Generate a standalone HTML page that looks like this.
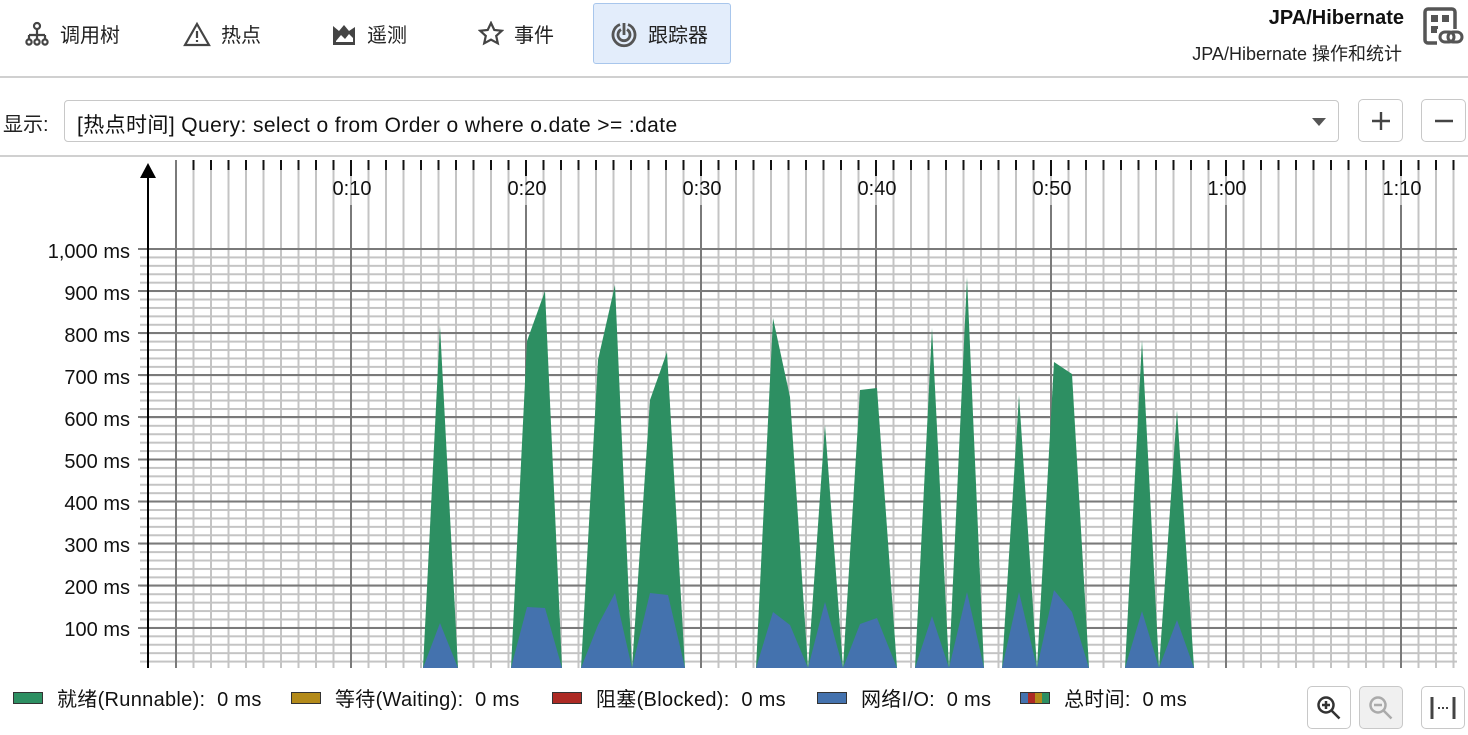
<!DOCTYPE html>
<html><head><meta charset="utf-8"><style>
*{box-sizing:border-box;margin:0;padding:0}
body{width:1468px;height:735px;background:#fff;position:relative;overflow:hidden;font-family:"Liberation Sans","Noto Sans CJK SC",sans-serif;color:#111}
.tab{position:absolute;top:3px;height:61px;display:flex;align-items:center;font-size:20px;color:#222}
.tab svg{margin-right:10px}
.sel{background:#e3edfb;border:1px solid #a8c6ec;border-radius:3px}
.btn{position:absolute;border:1.5px solid #c8c8c8;border-radius:5px;background:#fff;display:flex;align-items:center;justify-content:center}
.leg{position:absolute;top:683px;font-size:20px;display:flex;align-items:center;white-space:nowrap;letter-spacing:0.3px}
.sw{display:inline-block;width:30px;height:12px;border:1.5px solid #333;margin-right:14px}
</style></head><body>
<div class="tab" style="left:24px"><svg width="26" height="26" viewBox="0 0 26 26" fill="none" stroke="#444" stroke-width="2.2"><circle cx="13" cy="5" r="3"/><path d="M13 8v6M5 14h16M5 14v4M13 14v4M21 14v4"/><circle cx="5" cy="21" r="2.6"/><circle cx="13" cy="21" r="2.6"/><circle cx="21" cy="21" r="2.6"/></svg>调用树</div>
<div class="tab" style="left:183px"><svg width="28" height="26" viewBox="0 0 28 26" fill="none" stroke="#444" stroke-width="2.2"><path d="M14 3L26 24H2Z"/><path d="M14 10v7M14 19v2"/></svg>热点</div>
<div class="tab" style="left:331px"><svg width="26" height="26" viewBox="0 0 26 26"><path d="M2 5l6 5 5-6 5 6 6-4v18H2Z" fill="#444"/><path d="M5 20l5-6 4 4 4-5 4 4v4H5Z" fill="#fff"/></svg>遥测</div>
<div class="tab" style="left:478px"><svg width="26" height="26" viewBox="0 0 26 26" fill="none" stroke="#444" stroke-width="2.2"><path d="M13 2l3.3 7 7.5.8-5.6 5.1 1.6 7.4L13 18.6 6.2 22.3l1.6-7.4L2.2 9.8 9.7 9Z"/></svg>事件</div>
<div class="tab sel" style="left:593px;width:138px;padding-left:16px"><svg width="28" height="28" viewBox="0 0 28 28" fill="none" stroke="#555" stroke-width="2.8"><path d="M18 4.5A11 11 0 1 1 10 4.5"/><path d="M17 9.5A6 6 0 1 1 11 9.5"/><path d="M14 3v12"/></svg>跟踪器</div>
<div style="position:absolute;right:64px;top:7px;font-size:20px;font-weight:bold">JPA/Hibernate</div>
<div style="position:absolute;right:66px;top:40px;font-size:18px;color:#222">JPA/Hibernate 操作和统计</div>
<svg style="position:absolute;left:1423px;top:7px" width="44" height="40" viewBox="0 0 44 40"><rect x="2" y="2" width="30" height="34" rx="3" fill="none" stroke="#555" stroke-width="3.5"/><rect x="8" y="8" width="7" height="7" fill="#555"/><rect x="19" y="8" width="7" height="7" fill="#555"/><rect x="8" y="19" width="7" height="7" fill="#555"/><rect x="14" y="22" width="28" height="17" fill="#fff"/><rect x="17" y="25" width="14" height="10" rx="5" fill="none" stroke="#555" stroke-width="3"/><rect x="25" y="25" width="14" height="10" rx="5" fill="none" stroke="#555" stroke-width="3"/></svg>
<div style="position:absolute;left:0;top:76px;width:1468px;height:1.5px;background:#d0d0d0"></div>
<div style="position:absolute;left:3px;top:108px;font-size:20px;color:#222">显示:</div>
<div style="position:absolute;left:64px;top:100px;width:1275px;height:42px;border:1.5px solid #c8c8c8;border-radius:4px;font-size:21px;letter-spacing:0.4px;padding:8px 0 0 12px">[热点时间] Query: select o from Order o where o.date &gt;= :date
<div style="position:absolute;right:12px;top:17px;width:0;height:0;border-left:7px solid transparent;border-right:7px solid transparent;border-top:8px solid #555"></div></div>
<div class="btn" style="left:1358px;top:99px;width:45px;height:43px"><svg width="22" height="22"><path d="M11 2v18M2 11h18" stroke="#444" stroke-width="2.4"/></svg></div>
<div class="btn" style="left:1421px;top:99px;width:45px;height:43px"><svg width="22" height="22"><path d="M2 11h18" stroke="#444" stroke-width="2.4"/></svg></div>
<div style="position:absolute;left:0;top:155px;width:1468px;height:1.5px;background:#d0d0d0"></div>
<svg style="position:absolute;left:0;top:0" width="1468" height="735">
<defs>
<pattern id="vp" x="175" y="0" width="17.5" height="10" patternUnits="userSpaceOnUse"><rect x="0" y="0" width="2" height="10" fill="#c4c4c4"/></pattern>
<pattern id="hp" x="0" y="248" width="10" height="8.42" patternUnits="userSpaceOnUse"><rect x="0" y="0" width="10" height="2" fill="#c4c4c4"/></pattern>
<pattern id="tp" x="175" y="0" width="17.5" height="10" patternUnits="userSpaceOnUse"><rect x="0" y="0" width="2" height="10" fill="#111"/></pattern>
</defs>
<rect x="175" y="170" width="1282" height="498" fill="url(#vp)"/>
<rect x="175" y="160" width="1282" height="10" fill="url(#tp)"/>
<rect x="140" y="249" width="1317" height="419" fill="url(#hp)"/>
<g stroke="#7a7a7a" stroke-width="2">
<path d="M176 160V668M351 205V668M526 205V668M701 205V668M876 205V668M1051 205V668M1226 205V668M1401 205V668"/>
<path d="M138 249H1457M138 291H1457M138 333H1457M138 375H1457M138 417H1457M138 459.5H1457M138 501.5H1457M138 543.5H1457M138 585.5H1457M138 628H1457"/>
</g>
<g stroke="#111" stroke-width="2"><path d="M351 160v16M526 160v16M701 160v16M876 160v16M1051 160v16M1226 160v16M1401 160v16"/></g>
<g fill="#2d8f62">
<path d="M423 668L440 326L458 668Z"/>
<path d="M511 668L527 341L545 291L562 668Z"/>
<path d="M581 668L598 360L615 285L632 668Z"/>
<path d="M632 668L650 400L667 352L685 668Z"/>
<path d="M756 668L773 318L790 397L808 668Z"/>
<path d="M808 668L825 425L843 668Z"/>
<path d="M843 668L860 390L877 388L897 668Z"/>
<path d="M915 668L932 328L949 668Z"/>
<path d="M949 668L967 277L984 668Z"/>
<path d="M1002 668L1019 395L1037 668Z"/>
<path d="M1037 668L1054 362L1072 374L1089 668Z"/>
<path d="M1125 668L1142 340L1159 668Z"/>
<path d="M1159 668L1177 410L1194 668Z"/>
</g>
<g fill="#4472ae">
<path d="M423 668L440 623L458 668Z"/>
<path d="M511 668L527 607L545 608L562 668Z"/>
<path d="M581 668L598 625L615 593L632 668Z"/>
<path d="M632 668L650 593L668 595L685 668Z"/>
<path d="M756 668L773 612L790 625L808 668Z"/>
<path d="M808 668L825 602L843 668Z"/>
<path d="M843 668L860 624L877 618L897 668Z"/>
<path d="M915 668L932 616L949 668Z"/>
<path d="M949 668L967 592L984 668Z"/>
<path d="M1002 668L1019 592L1037 668Z"/>
<path d="M1037 668L1054 590L1072 612L1089 668Z"/>
<path d="M1125 668L1142 611L1159 668Z"/>
<path d="M1159 668L1177 620L1194 668Z"/>
</g>
<path d="M148 176V668" stroke="#000" stroke-width="2"/>
<path d="M140 178L148 163L156 178Z" fill="#000"/>
<g font-family="Liberation Sans, sans-serif" font-size="20" fill="#111" text-anchor="end">
<text x="130" y="258">1,000 ms</text><text x="130" y="300">900 ms</text><text x="130" y="342">800 ms</text><text x="130" y="384">700 ms</text><text x="130" y="426">600 ms</text><text x="130" y="468">500 ms</text><text x="130" y="510">400 ms</text><text x="130" y="552">300 ms</text><text x="130" y="594">200 ms</text><text x="130" y="636">100 ms</text>
</g>
<g font-family="Liberation Sans, sans-serif" font-size="20" fill="#111" text-anchor="middle">
<text x="352" y="195">0:10</text><text x="527" y="195">0:20</text><text x="702" y="195">0:30</text><text x="877" y="195">0:40</text><text x="1052" y="195">0:50</text><text x="1227" y="195">1:00</text><text x="1402" y="195">1:10</text>
</g>
</svg>
<div class="leg" style="left:13px"><span class="sw" style="background:#2d8f62"></span>就绪(Runnable):&nbsp; 0 ms</div>
<div class="leg" style="left:291px"><span class="sw" style="background:#b38a1a"></span>等待(Waiting):&nbsp; 0 ms</div>
<div class="leg" style="left:552px"><span class="sw" style="background:#ad2a24"></span>阻塞(Blocked):&nbsp; 0 ms</div>
<div class="leg" style="left:817px"><span class="sw" style="background:#4472ae"></span>网络I/O:&nbsp; 0 ms</div>
<div class="leg" style="left:1020px"><span class="sw" style="background:linear-gradient(90deg,#4472ae 25%,#ad2a24 25% 50%,#b38a1a 50% 75%,#2d8f62 75%)"></span>总时间:&nbsp; 0 ms</div>
<div class="btn" style="left:1307px;top:686px;width:44px;height:43px"><svg width="26" height="26" fill="none" stroke="#333" stroke-width="2.5"><circle cx="10" cy="10" r="7.5"/><path d="M10 6v8M6 10h8M15.5 15.5l8 8"/></svg></div>
<div class="btn" style="left:1359px;top:686px;width:44px;height:43px;background:#f0f0f0"><svg width="26" height="26" fill="none" stroke="#aaa" stroke-width="2.5"><circle cx="10" cy="10" r="7.5"/><path d="M6 10h8M15.5 15.5l8 8"/></svg></div>
<div class="btn" style="left:1421px;top:686px;width:44px;height:43px"><svg width="30" height="26"><path d="M4 2v22M26 2v22" stroke="#444" stroke-width="3"/><path d="M10 13h2M14 13h2M18 13h2" stroke="#444" stroke-width="2"/></svg></div>
</body></html>
